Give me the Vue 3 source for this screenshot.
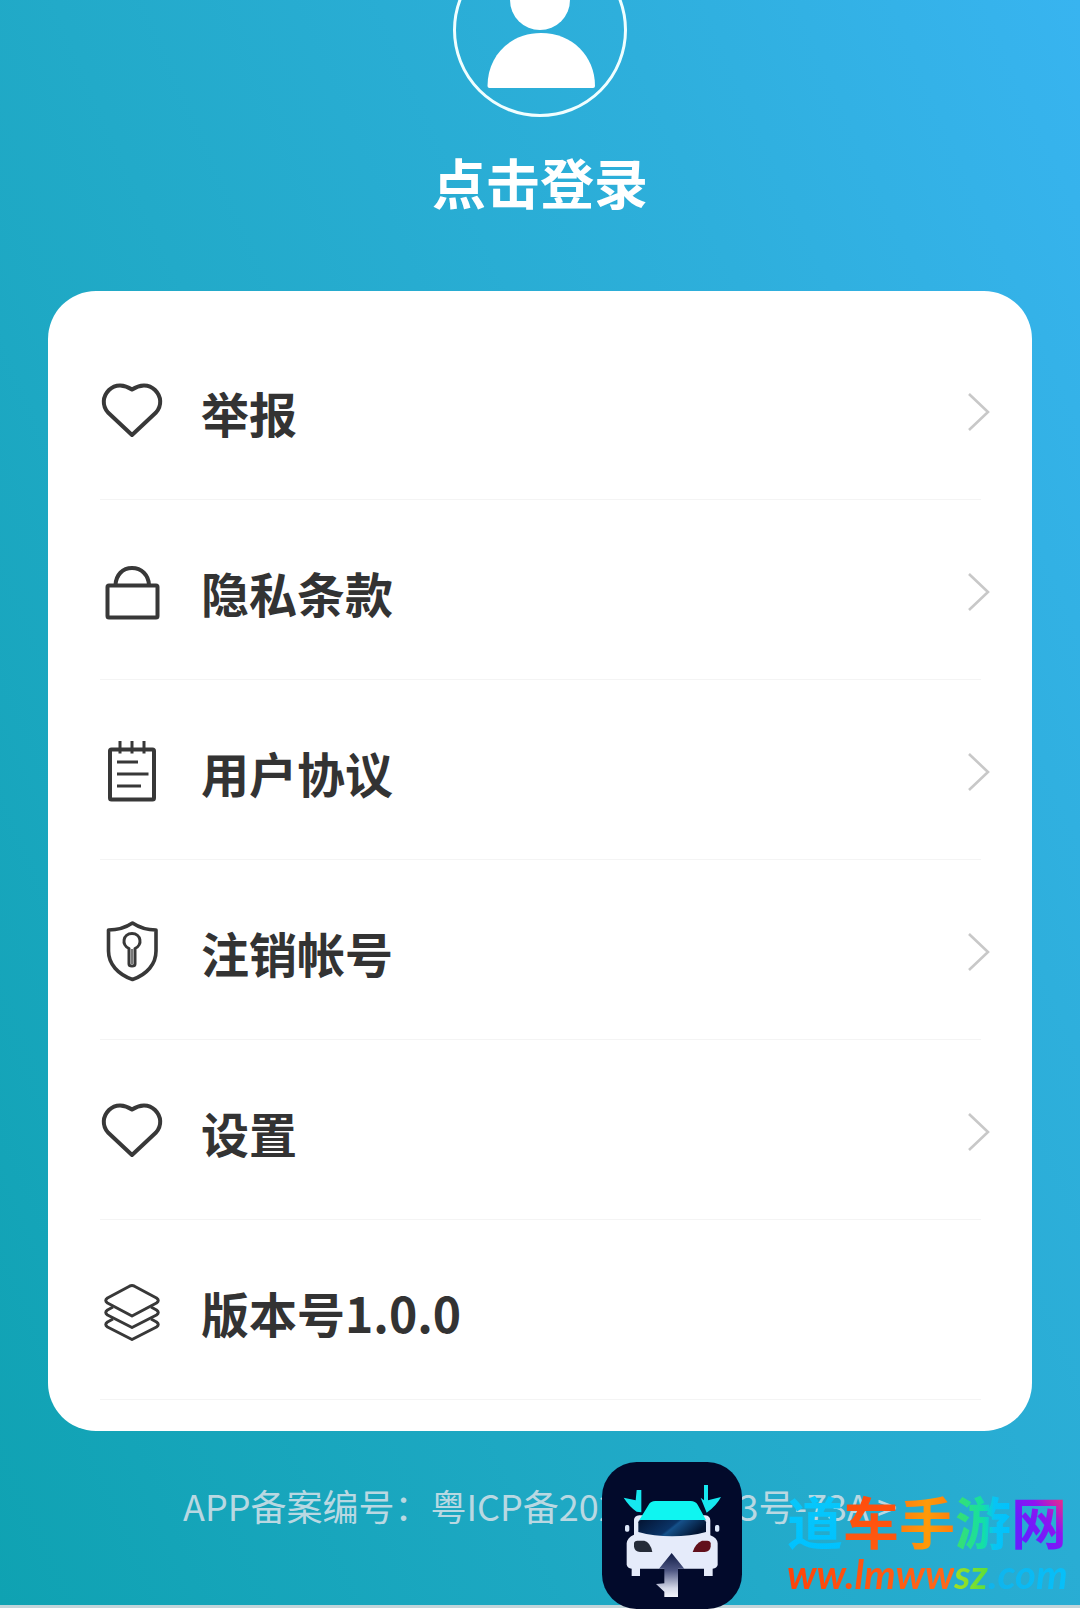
<script setup>
const items = [
  { label: '举报', icon: 'heart', link: true },
  { label: '隐私条款', icon: 'lock', link: true },
  { label: '用户协议', icon: 'note', link: true },
  { label: '注销帐号', icon: 'shield', link: true },
  { label: '设置', icon: 'heart', link: true },
  { label: '版本号1.0.0', icon: 'layers', link: false }
]
</script>

<template>
  <div class="page">
    <header class="profile">
      <svg class="avatar" viewBox="0 0 176 118" aria-hidden="true">
        <circle cx="88" cy="30" r="85.5" fill="none" stroke="#f0feff" stroke-width="3" />
        <circle cx="88" cy="0" r="30" fill="#fff" />
        <path d="M35.500 86C35.500 56 58 33 89 33S143 56 143 86Q143 88 141 88H37.500Q35.500 88 35.500 86Z" fill="#fff" />
      </svg>
      <button class="login" type="button">点击登录</button>
    </header>

    <main class="card">
      <ul class="menu">
        <li v-for="item in items" :key="item.label" class="item">
          <component :is="item.link ? 'button' : 'div'" class="row" :type="item.link ? 'button' : null">
            <svg class="icon" viewBox="0 0 64 64" aria-hidden="true">
              <path v-if="item.icon === 'heart'" d="M32 11.500C24.500 6.500 15.500 5.500 9 12C2.500 18.500 2 27.500 8 34.500L32 57L56 34.500C62 27.500 61.500 18.500 55 12C48.500 5.500 39.500 6.500 32 11.500Z" stroke-width="4" />
              <g v-else-if="item.icon === 'lock'" stroke-width="4">
                <rect x="7.500" y="27.500" width="50" height="32" rx="1.500" />
                <path d="M15.500 27C16 17 22.500 10 32 10S48.500 17 49 27" />
              </g>
              <g v-else-if="item.icon === 'note'" stroke-width="4">
                <rect x="10" y="11.500" width="44" height="50" rx="1.500" />
                <path d="M20 3V15.500M32 3V15.500M44 3V15.500M17 24H38M17 36H48.500M17 48H41" stroke-width="3" />
              </g>
              <g v-else-if="item.icon === 'shield'" stroke-width="3.600">
                <path d="M32.500 5C25 10 17 12 8.500 12V33C8.500 46 18 56.500 32.500 61.500C47 56.500 56 46 56 33V12C48 12 40 10 32.500 5Z" />
                <path d="M29 30.500C21 27 23 15.500 32 15.500S43 27 35 30.500V46Q35 48 32 48T29 46Z" stroke-width="3" />
                <path d="M32 31V46" stroke="#777" stroke-width="2" />
              </g>
              <g v-else stroke-width="3">
                <path d="M29.500 8.200Q32 7 34.500 8.200L56.500 20Q60 22.500 56.500 25L32 38L7.500 25Q4 22.500 7.500 20Z" />
                <path d="M13 29L7.500 32Q4 34.500 7.500 37L32 49.500L56.500 37Q60 34.500 56.500 32L51 29" />
                <path d="M13 41L7.500 44Q4 46.500 7.500 49L32 61.500L56.500 49Q60 46.500 56.500 44L51 41" />
              </g>
            </svg>
            <span class="label">{{ item.label }}</span>
            <svg v-if="item.link" class="chevron" viewBox="0 0 24 44" aria-hidden="true">
              <path d="M1 6L20 24L1 42" />
            </svg>
          </component>
        </li>
      </ul>
    </main>

    <footer class="footer">
      <a class="record" href="#">APP备案编号：粤ICP备2022000003号-73A &gt;</a>
      <svg class="app-icon" viewBox="36 36 420 441" aria-hidden="true">
        <defs>
          <linearGradient id="glass" x1="0" y1="0" x2="1" y2="0.300">
            <stop offset="0" stop-color="#031331" />
            <stop offset="0.550" stop-color="#0a3467" />
            <stop offset="0.600" stop-color="#15518a" />
            <stop offset="1" stop-color="#031634" />
          </linearGradient>
          <linearGradient id="arrow" x1="0" y1="0" x2="0" y2="1">
            <stop offset="0" stop-color="#101b45" />
            <stop offset="0.400" stop-color="#4f5884" />
            <stop offset="0.800" stop-color="#d4d8e8" />
            <stop offset="1" stop-color="#f2f4fb" />
          </linearGradient>
        </defs>
        <rect x="36" y="36" width="420" height="441" rx="104" fill="#020a2b" />
        <path d="M132 210Q132 198 148 196H346Q361 198 361 212V256Q382 264 383 280V345Q381 354 368 356V378H342V356H150V378H125V356Q112 354 110 344V280Q112 262 132 254Z" fill="#e5ebfa" />
        <path d="M148 210L176 164Q182 153 196 153H302Q316 153 323 164L348 210Z" fill="#0ff5f1" />
        <path d="M145 217Q145 210 152 210H341Q348 210 348 217V246Q300 259 246 259T145 246Z" fill="url(#glass)" />
        <path d="M132 280Q133 272 142 272H163Q181 276 187 306H150Q134 304 132 290Z" fill="#252b38" />
        <path d="M362 280Q361 272 352 272H336Q316 280 308 306H344Q360 304 362 290Z" fill="#62101b" />
        <rect x="105" y="225" width="13" height="20" rx="5" fill="#dce6f8" />
        <rect x="375" y="225" width="13" height="20" rx="5" fill="#dce6f8" />
        <path d="M101 143L137 151L140 120H154V187L140 185Q118 170 101 143Z" fill="#16e8f0" />
        <path d="M342 105H354V151L393 141Q379 168 350 188L332 143L342 151Z" fill="#16e8f0" />
        <path d="M245 309L283 356H264V441H223V425L198 402L223 400V356H207Z" fill="url(#arrow)" />
      </svg>
      <div class="brand">
        <div class="brand-name">
          <span class="c1">道</span><span class="c2">车</span><span class="c3">手</span><span class="c4">游</span><span class="c5">网</span>
        </div>
        <div class="brand-url"><span class="u1">ww.lmww</span><span class="u2">sz</span><span class="u3">.com</span></div>
      </div>
    </footer>
  </div>
</template>

<style>
body {
  margin: 0;
  background: #fff;
}
</style>

<style scoped>
.page {
  position: relative;
  box-sizing: border-box;
  margin-bottom: 5px;
  border-bottom: 3px solid #c2d5da;
  background: linear-gradient(66deg, #0fa2b2 0%, #22aac9 43%, #2eafdc 74%, #38b4f0 100%);
  font-family: "Noto Sans CJK SC", sans-serif;
}

.profile {
  display: flex;
  flex-direction: column;
  align-items: center;
  height: 291px;
}

.avatar {
  width: 176px;
  height: 118px;
}

.login {
  margin-top: 24px;
  padding: 0;
  border: 0;
  background: none;
  color: #fff;
  font: bold 54px/80px "Noto Sans CJK SC", sans-serif;
}

.card {
  margin: 0 48px;
  padding: 29px 40px 31px 52px;
  border-radius: 48px;
  background: #fff;
}

.menu {
  margin: 0;
  padding: 0;
  list-style: none;
}

.item::after {
  content: "";
  display: block;
  height: 1px;
  margin: -1px 11px 0 0;
  background: #f4f4f4;
}

.row {
  display: flex;
  align-items: center;
  gap: 37px;
  width: 100%;
  height: 180px;
  padding: 0;
  border: 0;
  background: none;
  color: #333;
  font: bold 48px/72px "Noto Sans CJK SC", sans-serif;
  text-align: left;
}

.icon {
  flex: none;
  width: 64px;
  height: 64px;
  fill: none;
  stroke: #383838;
  stroke-linejoin: round;
}

.label {
  flex: 1;
  padding-top: 4px;
}

.chevron {
  width: 24px;
  height: 44px;
  fill: none;
  stroke: #c8c8c8;
  stroke-width: 2.6;
}

.footer {
  position: relative;
  height: 174px;
  box-sizing: border-box;
  padding-top: 48px;
  text-align: center;
}

.record {
  color: #b9d8e2;
  font-size: 36px;
  line-height: 52px;
  text-decoration: none;
  white-space: nowrap;
}

.app-icon {
  position: absolute;
  right: 338px;
  bottom: -4px;
  width: 140px;
  height: 147px;
}

.brand {
  position: absolute;
  right: 13px;
  bottom: 7px;
  width: 280px;
  text-align: left;
  font-weight: bold;
}

.brand-name {
  display: flex;
  font-size: 56px;
  line-height: 60px;
}

.brand-url {
  font-family: Lato, "Noto Sans CJK SC", sans-serif;
  font-size: 40px;
  font-style: italic;
  line-height: 48px;
  white-space: nowrap;
}

.brand span {
  background-clip: text;
  color: transparent;
}

.c1 { background-image: linear-gradient(#08c8fa, #00c2ff); }
.c2 { background-image: linear-gradient(#ff4b0c, #ff5a10); }
.c3 { background-image: linear-gradient(90deg, #ff7d10, #ff9a08, #ff7d10); }
.c4 { background-image: linear-gradient(90deg, #3bdf6e, #14e0a4 50%, #08c4f4 70%, #00c2ff); }
.c5 { background-image: linear-gradient(50deg, #6a1cff 30%, #8f14f0 60%, #e02894 85%); }
.u1 { background-image: linear-gradient(90deg, #ff4308, #ff6a1c); }
.u2 { background-image: linear-gradient(90deg, #a4e020, #5ade3c); }
.u3 { background-image: linear-gradient(90deg, #10b4ec, #06c0fa); }
</style>
